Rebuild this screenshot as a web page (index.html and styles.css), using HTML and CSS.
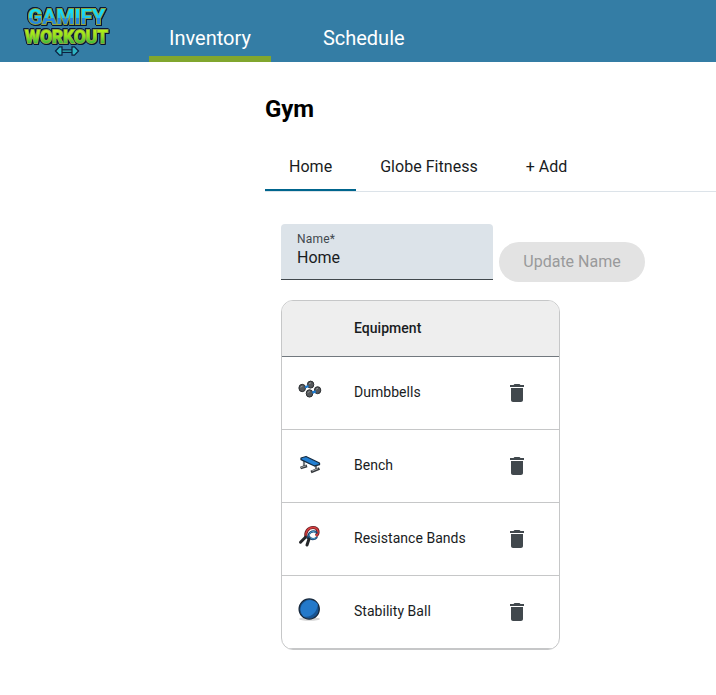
FILE: index.html
```html
<!DOCTYPE html>
<html lang="en">
<head>
<meta charset="utf-8">
<title>Gamify Workout</title>
<link rel="stylesheet" href="styles.css">
</head>
<body>
<svg class="defs" width="0" height="0" aria-hidden="true">
  <symbol id="trash" viewBox="0 0 24 24"><path d="M6 19c0 1.100.9 2 2 2h8c1.100 0 2-.9 2-2V7H6v12zM19 4h-3.500l-1-1h-5l-1 1H5v2h14V4z"/></symbol>
</svg>
<header class="topbar">
  <svg class="logo" viewBox="0 0 92 54" role="img">
    <defs>
      <linearGradient id="ice" x1="0" y1="0" x2="0" y2="1">
        <stop offset=".15" stop-color="#12e4f6"/><stop offset=".52" stop-color="#20c4f2"/><stop offset=".56" stop-color="#2586df"/><stop offset=".9" stop-color="#2d86d5"/>
      </linearGradient>
      <linearGradient id="lime" x1="0" y1="0" x2="0" y2="1">
        <stop offset=".2" stop-color="#b4f218"/><stop offset=".5" stop-color="#94e31c"/><stop offset=".85" stop-color="#35ba3c"/>
      </linearGradient>
    </defs>
    <text class="logo-word logo-top" x="7" y="20" textLength="77" lengthAdjust="spacingAndGlyphs">GAMIFY</text>
    <text class="logo-word logo-bottom" x="4" y="38.500" textLength="83" lengthAdjust="spacingAndGlyphs">WORKOUT</text>
    <g stroke="#0c2040" stroke-width="1.200">
      <path d="M40 45.800h12v2.500h-12z" fill="#35b9c0"/>
      <path d="M34.500 47l4-4.200h2.500v8.400h-2.500zM57.500 47l-4-4.200h-2.500v8.400h2.500z" fill="#2fb5c4"/>
    </g>
  </svg>
  <nav class="nav">
    <a class="nav-link active">Inventory</a>
    <a class="nav-link">Schedule</a>
  </nav>
</header>
<main class="page">
  <h1>Gym</h1>
  <div class="tabs">
    <a class="tab selected">Home</a>
    <a class="tab">Globe Fitness</a>
    <a class="tab">+ Add</a>
  </div>
  <section class="panel">
    <div class="form">
      <label class="field"><span class="field-label">Name*</span><span class="field-value">Home</span></label>
      <button class="update" disabled>Update Name</button>
    </div>
    <div class="table">
      <div class="row head"><span></span><span class="name">Equipment</span><span></span></div>
      <div class="row">
        <svg class="item" viewBox="0 0 24 24">
          <g fill="#55585b" stroke="#2b2e31" stroke-width="1">
            <ellipse cx="4.200" cy="10" rx="3.300" ry="3.700"/><ellipse cx="12.600" cy="6.600" rx="3.200" ry="3.500"/>
            <ellipse cx="11.500" cy="15.400" rx="3.300" ry="3.700"/><ellipse cx="19.600" cy="12.200" rx="3.200" ry="3.500"/>
          </g>
          <path d="M7 9.300l3.500-1.300M14.300 14.700l3.500-1.300" stroke="#1c7bd2" stroke-width="2.400"/>
          <path d="M2.500 9.200l2-1M11 5.800l2-1M9.700 14.500l2-1M18 11.200l2-1" stroke="#96999b"/>
        </svg>
        <span class="name">Dumbbells</span><svg class="trash"><use href="#trash"/></svg>
      </div>
      <div class="row">
        <svg class="item" viewBox="0 0 24 24">
          <path d="M6 10v5M18 14v4" stroke="#777b7f" stroke-width="2.200"/>
          <path d="M2.500 17l6.500-2.200M13 21l8.500-3.500" stroke="#34383c" stroke-width="2.800"/>
          <path d="M3 16.500l5-1.700M14 20l6-2.400" stroke="#a5a8aa"/>
          <path d="M3 7l5-1.500L21.500 12v1.700L16.500 15 3 8.700z" fill="#2380d4" stroke="#162d44" stroke-width="1.300" stroke-linejoin="round"/>
        </svg>
        <span class="name">Bench</span><svg class="trash"><use href="#trash"/></svg>
      </div>
      <div class="row">
        <svg class="item" viewBox="0 0 24 24">
          <path d="M8 13c-1-5 2-9.500 7-9.500 6 0 6 6 3 8.500" fill="none" stroke="#662126" stroke-width="3.200"/>
          <path d="M8 13c-1-5 2-9.500 7-9.500 6 0 6 6 3 8.500" fill="none" stroke="#d93c3d" stroke-width="1.500"/>
          <path d="M9.500 15l1.500-5c2-3.500 7-3.500 8-.5M10.500 12c2 4.500 7 3.500 8.500 1" fill="none" stroke="#1b446e" stroke-width="2.200"/>
          <path d="M11 12l1-3c2-2 4-2 6-.5M11 12.500c2 3.500 6 2.500 7.500.5" fill="none" stroke="#4d9dcd"/>
          <path d="M2.500 18.200l5-5M9 21l2-6" stroke="#24272a" stroke-width="3" stroke-linecap="round"/>
        </svg>
        <span class="name">Resistance Bands</span><svg class="trash"><use href="#trash"/></svg>
      </div>
      <div class="row">
        <svg class="item" viewBox="0 0 24 24">
          <ellipse cx="11.500" cy="22" rx="10.500" ry="1.800" fill="#d5d5d5"/>
          <circle cx="11.200" cy="12" r="10.100" fill="#175493" stroke="#182a3e" stroke-width="1.300"/>
          <path d="M19.900 7A9.600 9.600 0 1 0 5.400 19.500C14 21 19 15 19.900 7z" fill="#2479ca"/>
        </svg>
        <span class="name">Stability Ball</span><svg class="trash"><use href="#trash"/></svg>
      </div>
    </div>
  </section>
</main>
</body>
</html>
```
FILE: styles.css
```css
* { box-sizing: border-box; }
body { margin: 0; background: #fff; color: #191c1e; font-family: Roboto, sans-serif; overflow: hidden; }
.defs { display: block; }
.topbar { display: flex; height: 62px; background: #347da5; }
.logo { width: 92px; height: 54px; margin: 4px 0 0 21px; }
.logo-word { font-family: Roboto, sans-serif; font-weight: 700; stroke: #8ca640; stroke-width: 1.800px; paint-order: stroke; filter: drop-shadow(-.8px 0 0 #0b1838) drop-shadow(0 -.8px 0 #0b1838) drop-shadow(1.800px 1.600px 0 #09132f); }
.logo-top { font-size: 20.500px; fill: url(#ice); }
.logo-bottom { font-size: 18px; fill: url(#lime); }
.nav { display: flex; gap: 32px; margin-left: 36px; }
.nav-link { height: 62px; padding: 26px 20px 0; border-bottom: 6px solid transparent; color: #fff; font-size: 20px; line-height: 24px; }
.nav-link.active { border-color: #81a62e; }
.page { margin-left: 265px; padding-top: 31px; }
h1 { margin: 0; color: #000; font-size: 24px; line-height: 32px; letter-spacing: -.1px; }
.tabs { display: flex; height: 49px; margin-top: 18px; border-bottom: 1px solid #dce3e9; }
.tab { height: 48px; padding: 12px 24px 0; border-bottom: 2px solid transparent; font-size: 16px; line-height: 24px; letter-spacing: .03px; }
.tab.selected { border-color: #00658d; }
.panel { padding: 32px 16px 0; }
.form { display: flex; gap: 6px; height: 76px; }
.field { display: flex; flex-direction: column; width: 212px; height: 56px; padding: 7px 16px 0; background: #dce3e9; border-bottom: 1px solid #41484d; border-radius: 4px 4px 0 0; }
.field-label { color: #41484d; font-size: 12px; line-height: 16px; letter-spacing: .2px; }
.field-value { font-size: 16px; line-height: 21px; }
.update { width: 146px; height: 40px; margin-top: 18px; padding: 0; border: 0; border-radius: 20px; background: #e3e3e3; color: #999a9b; font: 400 16px/24px Roboto, sans-serif; }
.table { width: 279px; border: 1px solid #c6c7c8; border-radius: 12px; overflow: hidden; }
.row { display: grid; grid-template-columns: 72px 151px 1fr; align-items: center; height: 73px; border-bottom: 1px solid #c6c7c8; font-size: 14px; line-height: 20px; letter-spacing: .03px; }
.row.head { height: 56px; background: #eee; border-color: #71787e; font-weight: 500; }
.name { padding-bottom: 2px; }
.item { width: 24px; height: 24px; margin: -6px 0 0 16px; fill: none; }
.trash { width: 24px; height: 24px; fill: #41484d; }
```
